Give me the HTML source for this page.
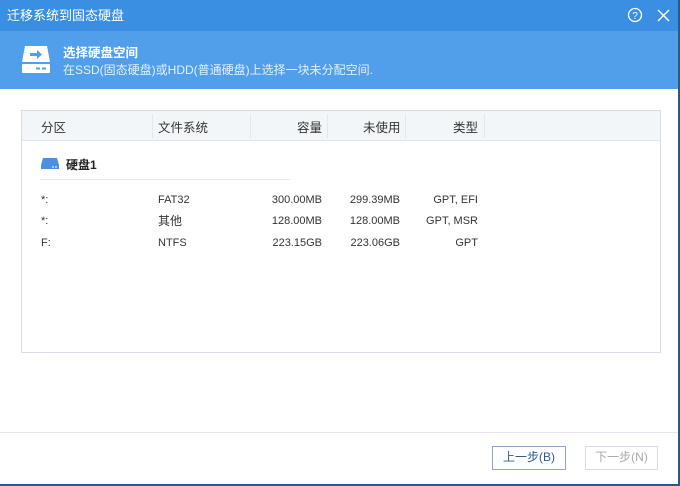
<!DOCTYPE html><html><head><meta charset="utf-8"><style>
*{margin:0;padding:0;box-sizing:border-box}
body{width:680px;height:486px;position:relative;background:#fff;font-family:"Liberation Sans","Noto Sans CJK SC",sans-serif;font-size:12px;color:#222;overflow:hidden}
.abs{position:absolute}
#tb{left:0;top:0;width:680px;height:31px;background:#3a8fe2;color:#fff;font-size:13px}
#hd{left:0;top:31px;width:680px;height:58px;background:#519fea;color:#fff}
#box{left:21px;top:110px;width:640px;height:243px;border:1px solid #d6dde5}
#hr{left:22px;top:111px;width:638px;height:30px;background:#f3f6f9;border-bottom:1px solid #e2e7ec}
.h{top:117px;font-size:12.5px;color:#333}
.r{font-size:11px;color:#333}
.sep{top:114px;width:1px;height:24px;background:#e4e8ec}
</style></head><body>
<div id="tb" class="abs"><span class="abs" style="left:7px;top:5px">迁移系统到固态硬盘</span>
<svg class="abs" style="left:627px;top:7px" width="16" height="16"><circle cx="8" cy="8" r="6.5" fill="none" stroke="#fff" stroke-width="1.3"/><text x="8" y="12" font-size="10" fill="#fff" text-anchor="middle" font-family="Liberation Sans">?</text></svg>
<svg class="abs" style="left:657px;top:9px" width="13" height="13"><path d="M1 1L12 12M12 1L1 12" stroke="#fff" stroke-width="1.4"/></svg></div>
<div id="hd" class="abs">
<svg class="abs" style="left:21px;top:13px" width="30" height="32"><path d="M4 2h22l3 16H1z" fill="#fff"/><rect x="1" y="20" width="28" height="9" rx="1" fill="#fff"/><path d="M9 9h7v-3l5 4.5-5 4.5v-3H9z" fill="#519fea"/><rect x="15" y="23.5" width="4" height="2" fill="#519fea"/><rect x="21" y="23.5" width="4" height="2" fill="#519fea"/></svg>
<span class="abs" style="left:63px;top:11px;font-weight:bold;font-size:12.5px">选择硬盘空间</span>
<span class="abs" style="left:63px;top:30px;font-size:12px;color:#e3efff">在SSD(固态硬盘)或HDD(普通硬盘)上选择一块未分配空间.</span></div>
<div id="box" class="abs"></div><div id="hr" class="abs"></div>
<div class="abs sep" style="left:152px"></div><div class="abs sep" style="left:250px"></div><div class="abs sep" style="left:327px"></div><div class="abs sep" style="left:405px"></div><div class="abs sep" style="left:484px"></div>
<span class="abs h" style="left:41px">分区</span><span class="abs h" style="left:158px">文件系统</span>
<span class="abs h" style="left:297px">容量</span><span class="abs h" style="left:363px">未使用</span><span class="abs h" style="left:453px">类型</span>
<svg class="abs" style="left:41px;top:157px" width="18" height="13"><path d="M2 1h14l2 7H0z" fill="#4a90e2"/><rect x="0" y="8" width="18" height="4" fill="#4a90e2"/><rect x="11" y="9.5" width="2" height="1" fill="#fff"/><rect x="14" y="9.5" width="2" height="1" fill="#fff"/></svg>
<span class="abs" style="left:66px;top:156px;font-weight:bold;font-size:12px">硬盘1</span>
<div class="abs" style="left:40px;top:179px;width:250px;height:1px;background:#e6e9ec"></div>
<div class="abs r" style="left:41px;top:194px">*:</div><div class="abs r" style="left:158px;top:194px">FAT32</div><div class="abs r" style="left:250px;top:194px;width:72px;text-align:right">300.00MB</div><div class="abs r" style="left:327px;top:194px;width:73px;text-align:right">299.39MB</div><div class="abs r" style="left:405px;top:194px;width:73px;text-align:right">GPT, EFI</div>
<div class="abs r" style="left:41px;top:215px">*:</div><div class="abs r" style="left:158px;top:212px;font-size:12px">其他</div><div class="abs r" style="left:250px;top:215px;width:72px;text-align:right">128.00MB</div><div class="abs r" style="left:327px;top:215px;width:73px;text-align:right">128.00MB</div><div class="abs r" style="left:405px;top:215px;width:73px;text-align:right">GPT, MSR</div>
<div class="abs r" style="left:41px;top:237px">F:</div><div class="abs r" style="left:158px;top:237px">NTFS</div><div class="abs r" style="left:250px;top:237px;width:72px;text-align:right">223.15GB</div><div class="abs r" style="left:327px;top:237px;width:73px;text-align:right">223.06GB</div><div class="abs r" style="left:405px;top:237px;width:73px;text-align:right">GPT</div>
<div class="abs" style="left:0;top:432px;width:680px;height:1px;background:#e3e8ee"></div>
<div class="abs" style="left:492px;top:446px;width:74px;height:24px;border:1px solid #8aa7c9;text-align:center;line-height:21px;color:#2a5b94;font-size:12px">上一步(B)</div>
<div class="abs" style="left:585px;top:446px;width:73px;height:24px;border:1px solid #d8dde3;text-align:center;line-height:21px;color:#aaa;font-size:12px">下一步(N)</div>
<div class="abs" style="left:678px;top:0;width:2px;height:486px;background:#1c5f8f"></div>
<div class="abs" style="left:0;top:484px;width:680px;height:2px;background:#1c5f8f"></div>
</body></html>
